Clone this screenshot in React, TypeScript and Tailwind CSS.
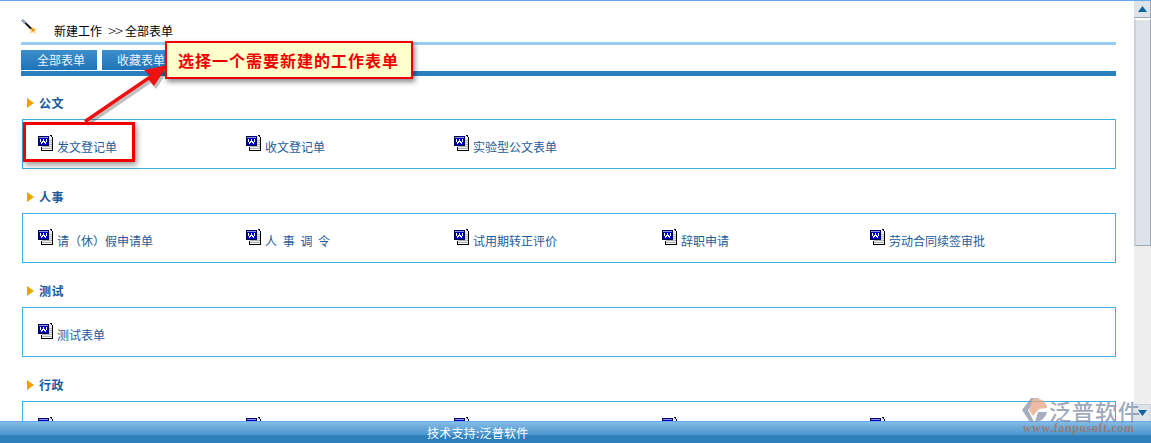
import React from 'react';

const sections = [
    { title: '公文', items: ['发文登记单', '收文登记单', '实验型公文表单'] },
    { title: '人事', items: ['请（休）假申请单', '人 事 调 令', '试用期转正评价', '辞职申请', '劳动合同续签审批'] },
    { title: '测试', items: ['测试表单'] },
    { title: '行政', items: ['', '', '', '', ''] },
];

const cjk = "font-['SimSun','Noto_Sans_CJK_SC',sans-serif]";

const WordIcon: React.FC = () => (
    <svg width="16" height="16" viewBox="0 0 16 16" className="shrink-0" shapeRendering="crispEdges">
        <rect x="5" y="1" width="9" height="13" fill="#ececec" />
        <path d="M11 5.5h3M11 7.5h3M11 9.5h3M4 11.5h10M4 13.5h10" stroke="#b0b0b0" strokeWidth="1" />
        <path d="M12 0.5h1.5V2M14.5 2V15.5H3.5V12" stroke="#000" strokeWidth="1" fill="none" />
        <rect x="0" y="1" width="11" height="10" fill="#0000b8" />
        <rect x="1" y="2" width="9" height="1" fill="#9090f0" />
        {/* W drawn pixel by pixel */}
        <rect x="2" y="4" width="1" height="3" fill="#fff" />
        <rect x="3" y="7" width="1" height="2" fill="#fff" />
        <rect x="4" y="6" width="1" height="2" fill="#fff" />
        <rect x="5" y="4" width="1" height="3" fill="#fff" />
        <rect x="6" y="6" width="1" height="2" fill="#fff" />
        <rect x="7" y="7" width="1" height="2" fill="#fff" />
        <rect x="8" y="4" width="1" height="3" fill="#fff" />
        <rect x="0.5" y="1.5" width="10" height="9" stroke="#000060" strokeWidth="1" fill="none" />
    </svg>
);

const WandIcon: React.FC = () => (
    <svg width="17" height="17" viewBox="0 0 17 17">
        <path d="M0.5 1.5l1.5-1 10 9.500-1.500 1.500z" fill="#111" />
        <path d="M0.5 1.500l1.500-1 3 3-1.500 1.500z" fill="#a8bcd4" stroke="#667" strokeWidth="0.4" />
        <path d="M12 7l1 2.500 3.500 0.500-2.500 1.500 0.500 3.500-2.500-2-3 1.500 1-3-2-1.500 3-0.500z" fill="#f8d060" />
        <circle cx="12" cy="11" r="1.300" fill="#e8842a" />
    </svg>
);

const SectionBlock: React.FC<{ title: string; items: string[] }> = ({ title, items }) => (
    <div className="shrink-0">
        <div className="h-5 flex items-center pl-[6px]">
            <span className="w-0 h-0 border-y-[5px] border-y-transparent border-l-[7px] border-l-[#f5a000]" />
            <span className="ml-[5px] text-xs font-bold tracking-[0.5px] text-[#1c5a9c]">{title}</span>
        </div>
        <div className="mt-[6px] ml-px w-[1094px] h-[50px] border border-[#3cb0e0] flex pl-[15px] pt-[15px]">
            {items.map((item, i) => (
                <div key={i} className="w-[208px] flex items-start">
                    <WordIcon />
                    <span className="ml-[3px] mt-1 text-xs leading-4 whitespace-pre [word-spacing:3px] text-[#1c5c9c]">{item}</span>
                </div>
            ))}
        </div>
    </div>
);

const App: React.FC = () => {
    return (
        <div className={`relative w-[1151px] h-[443px] overflow-hidden bg-white flex flex-col ${cjk}`}>
            <div className="h-px bg-[#66aaee] shrink-0" />
            <div className="flex flex-1 min-h-0">
                <div className="w-[1134px] pl-[21px] overflow-hidden">
                    <div className="w-[1095px] h-[41px] flex items-end pb-[3px] relative">
                        <div className="absolute left-0 top-[18px]"><WandIcon /></div>
                        <span className="ml-[33px] text-xs leading-4 text-black whitespace-pre">新建工作</span>
                        <span className="ml-[6px] w-[17px] text-[15px] leading-4 font-light tracking-[-1px] text-[#222]">&gt;&gt;</span>
                        <span className="text-xs leading-4 text-black">全部表单</span>
                    </div>
                    <div className="w-[1095px] h-[3px] bg-[#9ccbf0]" />
                    <div className="flex gap-[5px] mt-[5px]">
                        <div className="w-[76px] h-5 pl-4 bg-gradient-to-b from-[#3c8fcb] to-[#1e73b6] flex items-center text-xs text-[#e6f2fb]">全部表单</div>
                        <div className="w-[76px] h-5 pl-[15px] bg-gradient-to-b from-[#3c8fcb] to-[#1e73b6] flex items-center text-xs text-[#e6f2fb]">收藏表单</div>
                    </div>
                    <div className="w-[1095px] h-[5px] mt-px bg-[#2a7fbd]" />
                    <div className="pt-[17px] flex flex-col gap-[18px]">
                        {sections.map((s) => (
                            <SectionBlock key={s.title} title={s.title} items={s.items} />
                        ))}
                    </div>
                </div>
                <div className="w-[17px] bg-[#eeeeee] flex flex-col shrink-0">
                    <div className="h-[17px] bg-[#dde3e8] border-r border-b border-[#9aaab5] border-l-[#c8d2d8] flex items-center justify-center">
                        <svg width="9" height="6" viewBox="0 0 9 6"><path d="M4.500 0L9 6H0z" fill="#0b64a5" /></svg>
                    </div>
                    <div className="h-[228px] bg-[#dde3e8] border-l-2 border-r border-b border-t-2 border-t-white border-l-[#c8d2d8] border-r-[#9aaab5] border-b-[#9aaab5]" />
                    <div className="flex-1" />
                    <div className="h-[17px] bg-[#dde3e8] border-r border-t border-[#c8d2d8] flex items-center justify-center">
                        <svg width="9" height="6" viewBox="0 0 9 6"><path d="M4.500 6L9 0H0z" fill="#0b64a5" /></svg>
                    </div>
                </div>
            </div>
            <div className="h-[22px] shrink-0 border-t border-[#66aaff] bg-[linear-gradient(to_bottom,#85bbe3,#4795cf_62%,#2e7fbb_65%,#2e7fbb)] flex items-center pl-[427px] text-xs tracking-[0.25px] text-white">
                技术支持:泛普软件
            </div>

            {/* annotation on top of the page */}
            <svg className="absolute left-0 top-0 pointer-events-none" width="200" height="140" viewBox="0 0 200 140">
                <g fill="#000" opacity="0.25" transform="translate(2 3)">
                    <path d="M84 120l66-45 -6-5 24-5 -14 21 -5-6 -63 43z" />
                </g>
                <path d="M84 120l66-45 -6-5 24-5 -14 21 -5-6 -63 43z" fill="#ee1111" />
            </svg>
            <div className="absolute left-[23px] top-[122px] w-[112px] h-[40px] border-[3px] border-[#ee0000] shadow-[2px_3px_6px_rgba(0,0,0,0.4)]" />
            <div className="absolute left-[165px] top-[41px] w-[248px] h-[38px] bg-[#ffffcc] border-2 border-[#ee0000] shadow-[2px_3px_5px_rgba(0,0,0,0.45)] flex items-center pl-[11px] text-base font-bold tracking-[1px] text-[#ee0000] whitespace-nowrap">
                选择一个需要新建的工作表单
            </div>

            {/* watermark */}
            <div className="absolute left-[1022px] top-[398px] w-[122px] h-[36px] pointer-events-none opacity-75">
                <svg className="absolute left-0 top-0" width="26" height="25" viewBox="0 0 26 25">
                    <path d="M9 0h8L6 12l6 12H8L0 12z" fill="#8a93a8" />
                    <path d="M11 1c7-2 14 3 14 9l-8 1-6 7-4-6z" fill="#e8a585" />
                    <path d="M16 14h9c-1 5-6 10-12 10z" fill="#8a93a8" />
                </svg>
                <span className="absolute left-[27px] top-0 text-[22px] leading-[24px] font-medium tracking-[1px] text-[#7f8ea6] whitespace-nowrap">泛普软件</span>
                <span className="absolute left-[1px] top-[25px] font-['Liberation_Serif',serif] text-xs leading-[11px] font-bold tracking-[0.6px] text-[#a8705a] whitespace-nowrap">www.fanpusoft.com</span>
            </div>
        </div>
    );
};

export default App;
